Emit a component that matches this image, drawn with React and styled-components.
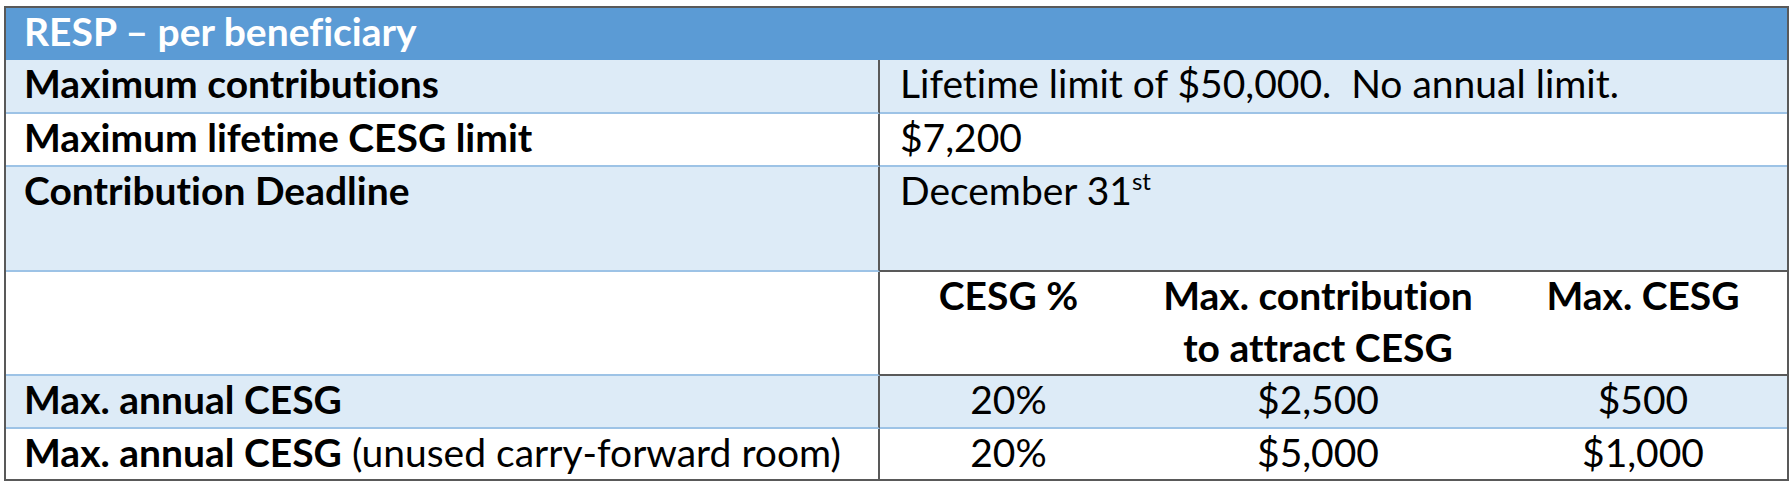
import React from "react";
import styled, { createGlobalStyle } from "styled-components";

const GlobalStyle = createGlobalStyle`
  html, body {
    margin: 0;
    padding: 0;
    background: #ffffff;
  }
  body {
    font-family: Lato, "Open Sans", sans-serif;
    font-variant-ligatures: none;
    font-feature-settings: "liga" 0, "clig" 0;
    color: #000000;
  }
`;

const Page = styled.div`
  padding: 6px 0 0 4px;
`;

const Table = styled.div`
  width: 1785px;
  box-sizing: border-box;
  border: 2px solid #595959;
`;

const HeaderBar = styled.div`
  height: 52px;
  box-sizing: border-box;
  background: #5b9bd5;
  color: #ffffff;
  font-weight: 700;
  font-size: 39px;
  line-height: 47px;
  padding: 0 18px;
`;

const Grid = styled.div`
  display: grid;
  grid-template-columns: 874px 257px 362px 1fr;
  grid-template-rows: 54px 53px 105px 104px 53px 50px;
`;

const Cell = styled.div`
  box-sizing: border-box;
  background: ${(p) => (p.$striped ? "#ddebf7" : "#ffffff")};
  border-bottom: ${(p) =>
    p.$last ? "none" : `2px solid ${p.$dark ? "#595959" : "#9dc3e6"}`};
  font-size: 39px;
  line-height: 47px;
  padding: 0 18px;
  white-space: pre;
`;

const Label = styled(Cell)`
  border-right: 2px solid #595959;
  font-weight: 700;
`;

const Value = styled(Cell)`
  grid-column: span 3;
  padding-left: 20px;
`;

const Num = styled(Cell)`
  text-align: center;
  padding: 0;
  font-weight: ${(p) => (p.$bold ? 700 : 400)};
`;

const ColHead = styled(Num)`
  line-height: 52px;
  margin-top: 0;
  padding-top: 0;
  & > span {
    display: block;
    margin-top: -3px;
  }
`;

const Light = styled.span`
  font-weight: 400;
`;

const Sup = styled.sup`
  font-size: 24px;
  line-height: 0;
  vertical-align: 15px;
`;

const figures = [
  { label: "Max. annual CESG", note: null, pct: "20%", contrib: "$2,500", grant: "$500" },
  {
    label: "Max. annual CESG",
    note: " (unused carry-forward room)",
    pct: "20%",
    contrib: "$5,000",
    grant: "$1,000",
  },
];

export default function App() {
  return (
    <Page>
      <GlobalStyle />
      <Table>
        <HeaderBar>RESP – per beneficiary</HeaderBar>
        <Grid>
          <Label $striped>Maximum contributions</Label>
          <Value $striped>Lifetime limit of $50,000.  No annual limit.</Value>

          <Label>Maximum lifetime CESG limit</Label>
          <Value>$7,200</Value>

          <Label $striped>Contribution Deadline</Label>
          <Value $striped $dark>
            December 31<Sup>st</Sup>
          </Value>

          <Label />
          <ColHead $bold $dark>
            <span>CESG %</span>
          </ColHead>
          <ColHead $bold $dark>
            <span>{"Max. contribution\nto attract CESG"}</span>
          </ColHead>
          <ColHead $bold $dark>
            <span>Max. CESG</span>
          </ColHead>

          {figures.map((f, i) => {
            const striped = i % 2 === 0;
            const last = i === figures.length - 1;
            return (
              <React.Fragment key={i}>
                <Label $striped={striped} $last={last}>
                  {f.label}
                  {f.note && <Light>{f.note}</Light>}
                </Label>
                <Num $striped={striped} $last={last}>{f.pct}</Num>
                <Num $striped={striped} $last={last}>{f.contrib}</Num>
                <Num $striped={striped} $last={last}>{f.grant}</Num>
              </React.Fragment>
            );
          })}
        </Grid>
      </Table>
    </Page>
  );
}
